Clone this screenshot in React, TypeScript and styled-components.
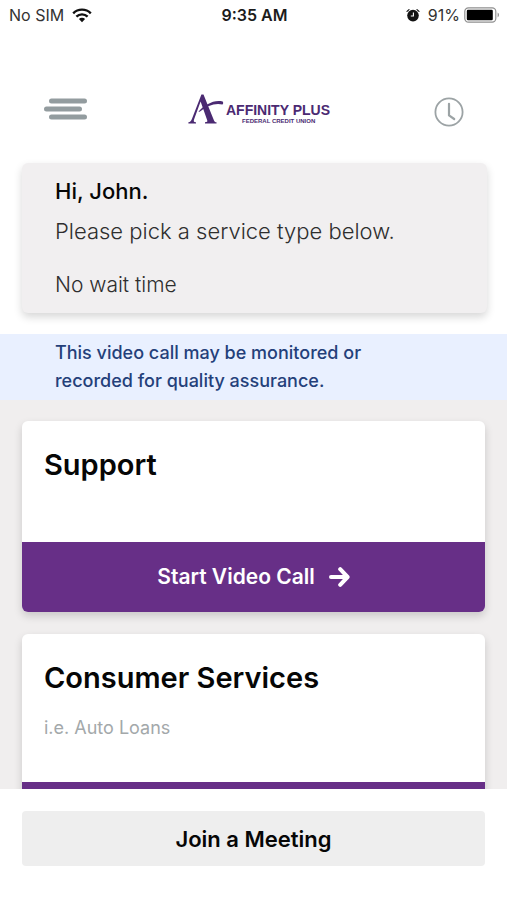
import React from "react";
import styled, { createGlobalStyle } from "styled-components";

const GlobalStyle = createGlobalStyle`
  *, *::before, *::after { box-sizing: border-box; }
  body {
    margin: 0;
    background: #ffffff;
    color: #060606;
    font-family: "Inter", "Noto Sans", sans-serif;
  }
  h1, h2, p { margin: 0; }
  button { font-family: inherit; border: 0; padding: 0; cursor: pointer; }
`;

const Screen = styled.div`
  display: flex;
  flex-direction: column;
  height: 100vh;
  overflow: hidden;
`;

const StatusBar = styled.div`
  display: grid;
  grid-template-columns: 1fr auto 1fr;
  align-items: center;
  flex: none;
  height: 30px;
  padding: 0 7px 0 9px;
  font-size: 16px;
  line-height: 20px;
  color: #333333;
`;

const StatusGroup = styled.div<{ $end?: boolean }>`
  display: flex;
  align-items: center;
  justify-content: ${(p) => (p.$end ? "flex-end" : "flex-start")};
  gap: ${(p) => (p.$end ? "4px" : "8px")};
`;

const AlarmSlot = styled.span`
  display: flex;
  margin-right: 4px;
`;

const Time = styled.time`
  font-weight: 600;
  color: #1c1c1c;
`;

const Header = styled.header`
  display: grid;
  grid-template-columns: 1fr auto 1fr;
  align-items: center;
  flex: none;
  padding: 64px 43px 33px 44px;
`;

const IconButton = styled.button<{ $end?: boolean }>`
  display: flex;
  background: transparent;
  justify-self: ${(p) => (p.$end ? "end" : "start")};
`;

const Greeting = styled.section`
  flex: none;
  margin: 0 20px 0 22px;
  padding: 12px 32px 14px 33px;
  border-radius: 6px;
  background: #f1eff0;
  box-shadow: 0 4px 8px rgba(0, 0, 0, 0.16);
`;

const Hello = styled.h1`
  font-size: 22px;
  line-height: 32px;
  font-weight: 500;
`;

const Prompt = styled.p`
  && { margin-top: 8px; }
  font-size: 22px;
  line-height: 32px;
  font-weight: 300;
  color: #2e2e2e;
`;

const Wait = styled.p`
  && { margin-top: 24px; }
  font-size: 21px;
  line-height: 28px;
  font-weight: 300;
  color: #2e2e2e;
`;

const Notice = styled.p`
  flex: none;
  && { margin-top: 21px; }
  padding: 5px 120px 5px 55px;
  background: #e9f0ff;
  color: #24407a;
  font-size: 18px;
  line-height: 28px;
  font-weight: 500;
`;

const Services = styled.main`
  display: flex;
  flex-direction: column;
  gap: 22px;
  flex: 1;
  min-height: 0;
  padding: 21px 22px 0;
  overflow: hidden;
  background: #f0eeee;
`;

const Card = styled.article`
  flex: none;
  border-radius: 6px;
  overflow: hidden;
  background: #ffffff;
  box-shadow: 0 4px 8px rgba(0, 0, 0, 0.16);
`;

const CardBody = styled.div<{ $detailed?: boolean }>`
  min-height: ${(p) => (p.$detailed ? "148px" : "121px")};
  padding: 24px 22px;
`;

const CardTitle = styled.h2`
  font-size: 29px;
  line-height: 40px;
  font-weight: 600;
`;

const CardNote = styled.p`
  && { margin-top: 16px; }
  font-size: 18px;
  line-height: 28px;
  color: #a3a8aa;
`;

const CallButton = styled.button`
  display: flex;
  align-items: center;
  justify-content: center;
  gap: 14px;
  width: 100%;
  height: 70px;
  background: #672f87;
  color: #ffffff;
  font-size: 21px;
  line-height: 28px;
  font-weight: 600;
`;

const Footer = styled.footer`
  flex: none;
  padding: 22px 22px 34px;
  background: #ffffff;
`;

const JoinButton = styled.button`
  display: block;
  width: 100%;
  height: 55px;
  border-radius: 4px;
  background: #eeeeee;
  color: #060606;
  font-size: 22px;
  line-height: 32px;
  font-weight: 600;
`;

const WifiIcon = () => (
  <svg width="20" height="15" viewBox="0 0 20 15" aria-hidden="true">
    <g fill="none" stroke="#111" strokeWidth="2.4">
      <path d="M1.2 5.3a12.4 12.4 0 0 1 17.6 0" />
      <path d="M4.4 8.7a7.9 7.9 0 0 1 11.2 0" />
    </g>
    <path d="M6.9 11.1a4.4 4.4 0 0 1 6.2 0L10 14.3z" fill="#111" />
  </svg>
);

const AlarmIcon = () => (
  <svg width="14" height="14" viewBox="0 0 14 14" aria-hidden="true">
    <circle cx="7" cy="7.6" r="5.800" fill="#111" />
    <path d="M1 3.4 3 1.6M13 3.4 11 1.6" stroke="#111" strokeWidth="1.2" strokeLinecap="round" />
    <path d="M7.4 4.6v3.4H4.8" fill="none" stroke="#fff" strokeWidth="1.1" />
  </svg>
);

const BatteryIcon = () => (
  <svg width="36" height="16" viewBox="0 0 36 16" aria-hidden="true">
    <rect x=".8" y=".8" width="31" height="14.4" rx="3.6" fill="none" stroke="#8f8f8f" strokeWidth="1.2" />
    <rect x="2.8" y="2.8" width="26" height="10.4" rx="1.2" fill="#000" />
    <path d="M33.6 5.6c1.9.9 1.9 3.9 0 4.8z" fill="#8f8f8f" />
  </svg>
);

const MenuIcon = () => (
  <svg width="44" height="30" viewBox="0 0 44 30" aria-hidden="true">
    <g stroke="#939c9f" strokeWidth="5" strokeLinecap="round">
      <path d="M7.5 4h33M2.5 12h33M7.5 20h33" />
    </g>
  </svg>
);

const ClockIcon = () => (
  <svg width="30" height="30" viewBox="0 0 30 30" aria-hidden="true">
    <circle cx="15" cy="15" r="13.6" fill="none" stroke="#9ca3a5" strokeWidth="1.8" />
    <path d="M15 6.8v11.6l5.2 3.6" fill="none" stroke="#9ca3a5" strokeWidth="2.2" strokeLinecap="round" strokeLinejoin="round" />
  </svg>
);

const ArrowIcon = () => (
  <svg width="21" height="20" viewBox="0 0 21 20" aria-hidden="true">
    <path d="M2 10h16M11.200 2.200l7.400 7.800-7.400 7.800" fill="none" stroke="#fff" strokeWidth="4" strokeLinecap="round" strokeLinejoin="round" />
  </svg>
);

const Logo = () => (
  <svg width="160" height="36" viewBox="-14 0 160 36" role="img" aria-label="Affinity Plus Federal Credit Union">
    <g fill="#4b2a72">
      <path d="M13.400 .4h2.100L26 26.400c.5 1.300 1 1.700 2.500 1.900v1.100H17v-1.100c2-.2 2.700-.6 2.200-2L12.600 7.600 6.400 24.400c-1.100 2.900-.7 3.700 1.600 3.900v1.100H.4v-1.100c2-.3 2.600-1.100 3.600-3.500z" />
      <path d="M10.600 17.400C16 11 26 5.200 34.600 7.400c.8.3.8 3-.2 3.100C27 8.700 19 11.800 12.400 17.200c-.8.6-2.500.9-1.800.2z" />
    </g>
    <g fill="#4b2a72" fontFamily="Liberation Sans, Arial, sans-serif" fontWeight="700">
      <text x="38" y="21" fontSize="14">AFFINITY PLUS</text>
      <text x="54" y="29" fontSize="6">FEDERAL CREDIT UNION</text>
    </g>
  </svg>
);

const services: { name: string; note?: string }[] = [
  { name: "Support" },
  { name: "Consumer Services", note: "i.e. Auto Loans" },
];

export default function App() {
  return (
    <Screen>
      <GlobalStyle />
      <StatusBar>
        <StatusGroup>
          <span>No SIM</span>
          <WifiIcon />
        </StatusGroup>
        <Time>9:35 AM</Time>
        <StatusGroup $end>
          <AlarmSlot>
            <AlarmIcon />
          </AlarmSlot>
          <span>91%</span>
          <BatteryIcon />
        </StatusGroup>
      </StatusBar>
      <Header>
        <IconButton aria-label="Menu">
          <MenuIcon />
        </IconButton>
        <Logo />
        <IconButton $end aria-label="History">
          <ClockIcon />
        </IconButton>
      </Header>
      <Greeting>
        <Hello>Hi, John.</Hello>
        <Prompt>Please pick a service type below.</Prompt>
        <Wait>No wait time</Wait>
      </Greeting>
      <Notice>This video call may be monitored or recorded for quality assurance.</Notice>
      <Services>
        {services.map((s) => (
          <Card key={s.name}>
            <CardBody $detailed={Boolean(s.note)}>
              <CardTitle>{s.name}</CardTitle>
              {s.note && <CardNote>{s.note}</CardNote>}
            </CardBody>
            <CallButton>
              Start Video Call
              <ArrowIcon />
            </CallButton>
          </Card>
        ))}
      </Services>
      <Footer>
        <JoinButton>Join a Meeting</JoinButton>
      </Footer>
    </Screen>
  );
}
